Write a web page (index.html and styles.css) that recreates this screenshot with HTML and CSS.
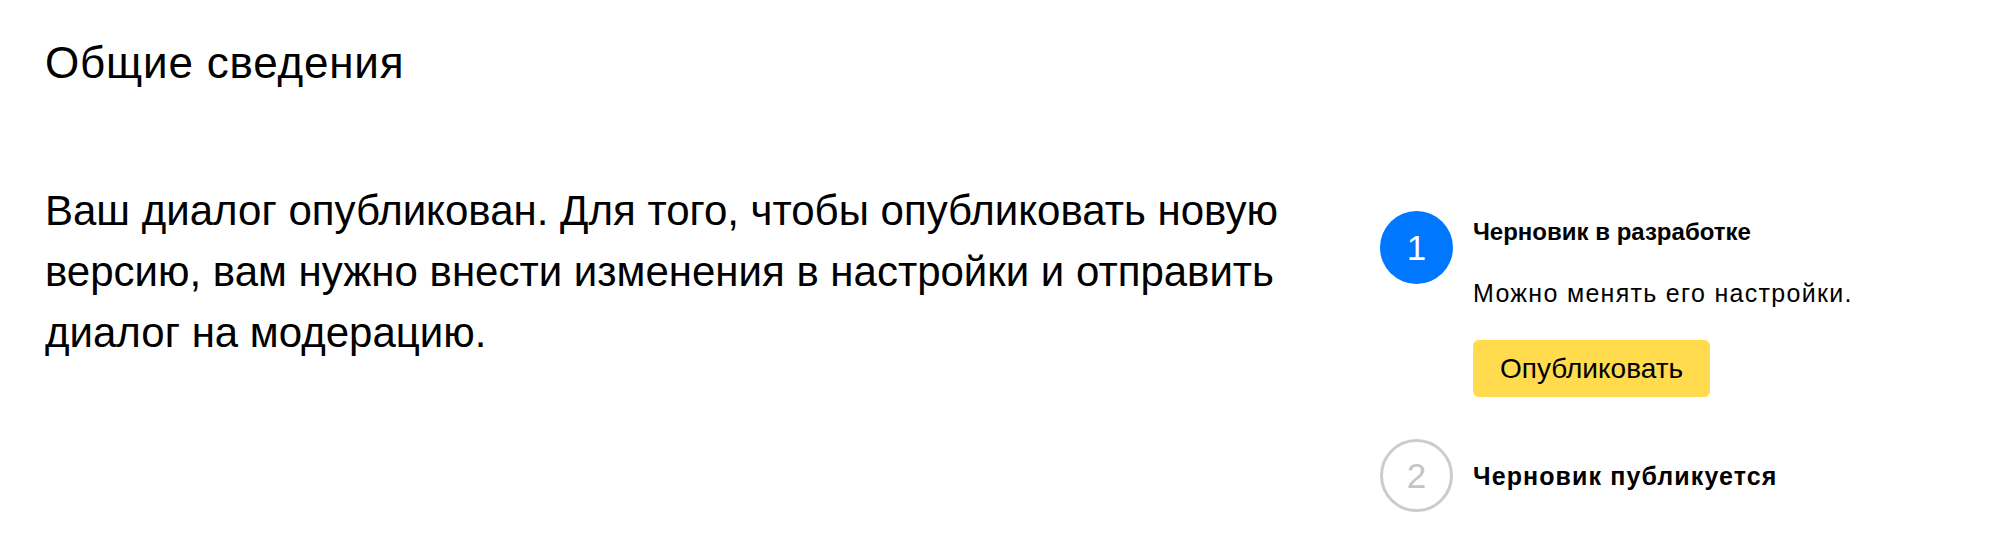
FILE: index.html
```html
<!DOCTYPE html>
<html lang="ru">
<head>
<meta charset="utf-8">
<title>Общие сведения</title>
<link rel="stylesheet" href="styles.css">
</head>
<body>
<main class="page">
  <h1 class="title">Общие сведения</h1>
  <section class="content">
    <p class="lead">Ваш диалог опубликован. Для того, чтобы опубликовать новую версию, вам нужно внести изменения в настройки и отправить диалог на модерацию.</p>
    <ol class="steps">
      <li class="step step-active">
        <span class="step-num">1</span>
        <div class="step-body">
          <div class="step-title">Черновик в разработке</div>
          <div class="step-desc">Можно менять его настройки.</div>
          <button class="btn" type="button">Опубликовать</button>
        </div>
      </li>
      <li class="step step-next">
        <span class="step-num">2</span>
        <div class="step-body">
          <div class="step-title step-title-next">Черновик публикуется</div>
        </div>
      </li>
    </ol>
  </section>
</main>
</body>
</html>
```
FILE: styles.css
```css
* { box-sizing: border-box; }
html, body {
  margin: 0;
  padding: 0;
  background: #fff;
}
body {
  font-family: "Liberation Sans", Arial, Helvetica, sans-serif;
  color: #000;
}
.page {
  padding: 0 45px;
}
.title {
  margin: 0;
  padding-top: 39px;
  font-size: 44px;
  line-height: 48px;
  letter-spacing: 0.8px;
  font-weight: 400;
}
.content {
  display: flex;
  align-items: flex-start;
  margin-top: 93px;
}
.lead {
  flex: 0 0 1290px;
  margin: 0 45px 0 0;
  font-size: 42px;
  line-height: 61px;
}
.steps {
  list-style: none;
  margin: 31px 0 0;
  padding: 0;
  display: flex;
  flex-direction: column;
  gap: 42px;
}
.step {
  display: flex;
  align-items: flex-start;
  gap: 20px;
}
.step-next {
  align-items: center;
}
.step-num {
  flex: 0 0 73px;
  width: 73px;
  height: 73px;
  border-radius: 50%;
  display: flex;
  align-items: center;
  justify-content: center;
  font-size: 35px;
  line-height: 1;
}
.step-active .step-num {
  background: #0077ff;
  color: #fff;
}
.step-next .step-num {
  border: 3px solid #cccccc;
  color: #c4c4c4;
}
.step-active .step-body {
  padding-top: 6px;
}
.step-title {
  font-size: 24px;
  line-height: 30px;
  font-weight: 700;
}
.step-title-next {
  font-size: 25px;
  letter-spacing: 1.1px;
}
.step-desc {
  margin-top: 31px;
  font-size: 25px;
  line-height: 30px;
  letter-spacing: 1.3px;
}
.btn {
  margin-top: 32px;
  display: block;
  height: 57px;
  padding: 0 27px;
  border: 0;
  border-radius: 6px;
  background: #ffdb4d;
  color: #000;
  font-family: inherit;
  font-size: 28px;
  line-height: 57px;
}
```
